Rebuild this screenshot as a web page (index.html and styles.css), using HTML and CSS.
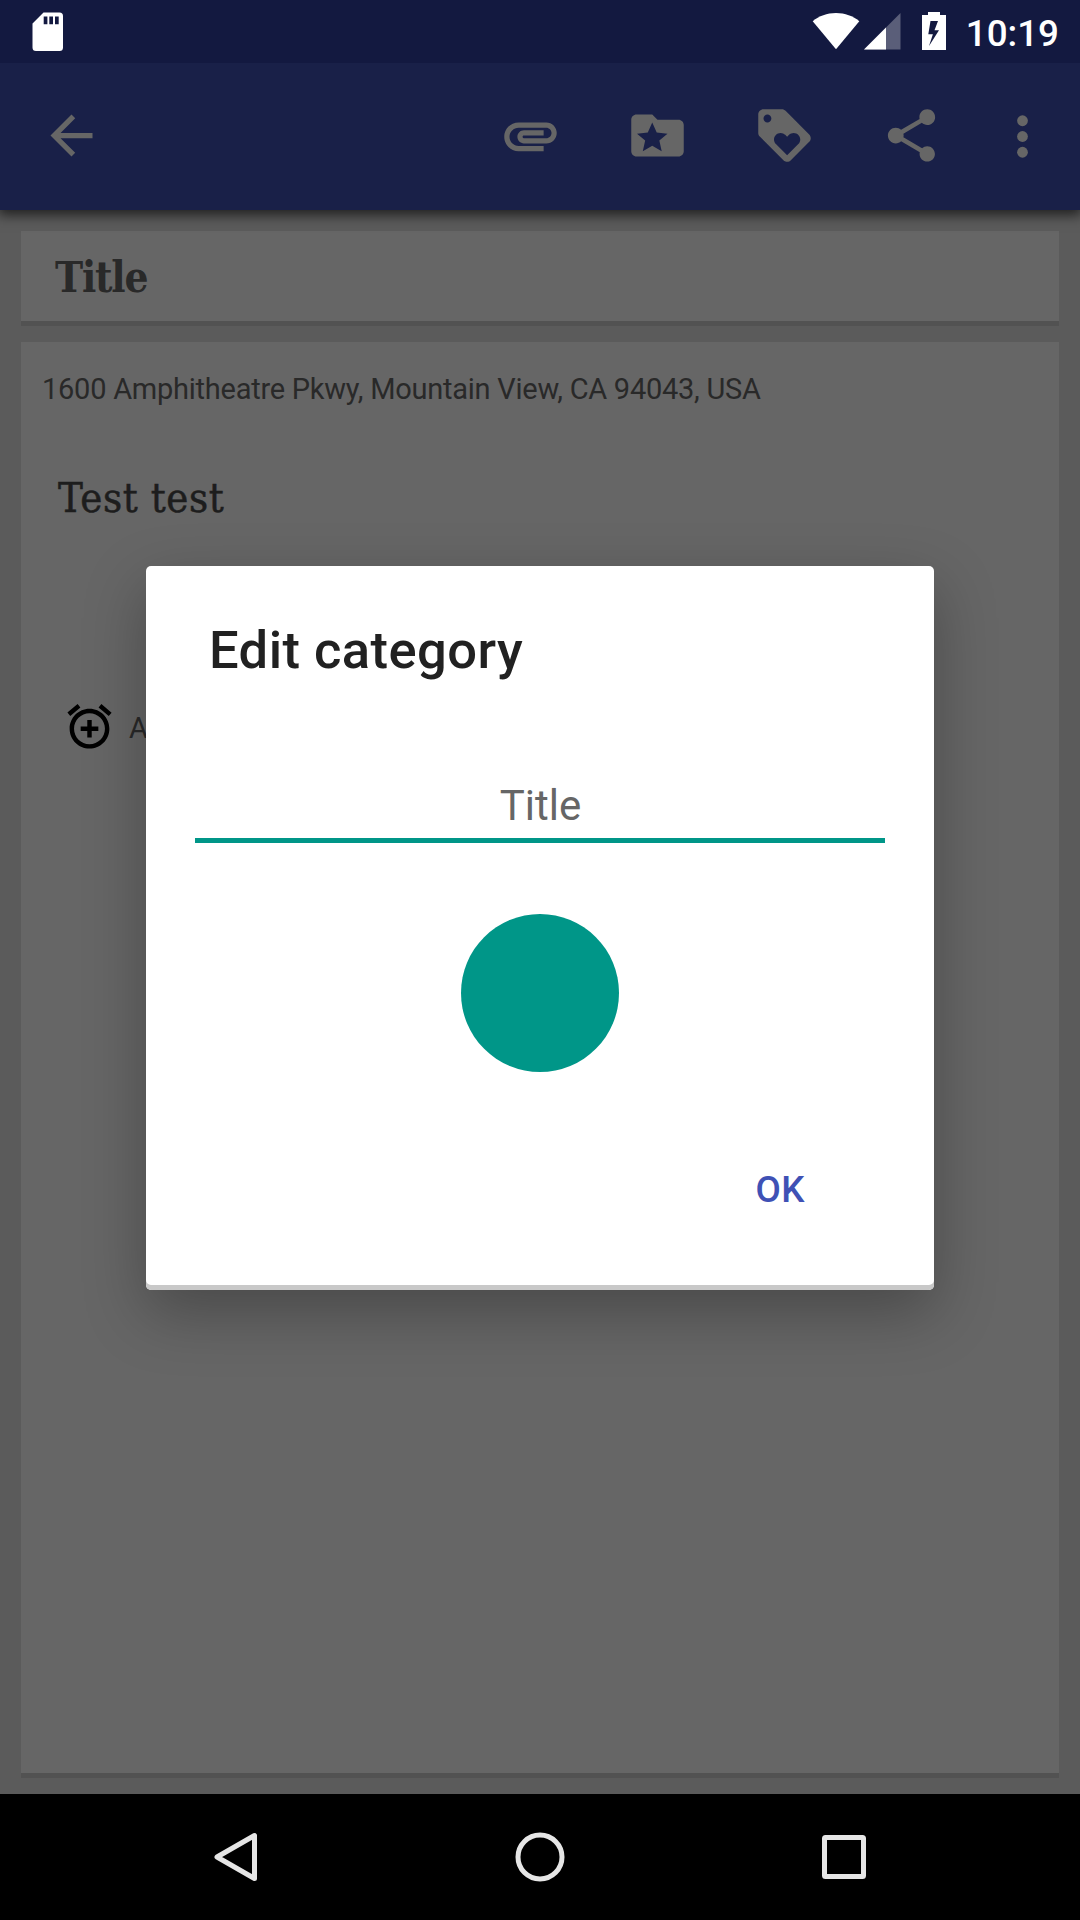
FILE: index.html
```html
<!DOCTYPE html>
<html lang="en">
<head>
<meta charset="utf-8">
<title>Edit category</title>
<link rel="stylesheet" href="styles.css">
</head>
<body>
<div class="screen">
  <header class="status">
    <svg class="sd" width="32" height="40" viewBox="0 0 32 40"><path fill="#fff" fill-rule="evenodd" d="M11.5.5H27.500a3.500 3.500 0 0 1 3.500 3.500V35.500a3.500 3.500 0 0 1-3.500 3.500H4a3.500 3.500 0 0 1-3.500-3.500V11.500ZM11.700 4.500v7.700h3.700V4.500ZM17.300 4.500v7.700h3.700V4.500ZM23 4.500v7.700h3.700V4.500Z"/></svg>
    <svg class="wifi" width="48" height="38" viewBox="0 0 48 38"><path fill="#fff" d="M24 37.200.7 9.200C7 4 15 1 24 1s17 3 23.300 8.200Z"/></svg>
    <svg class="signal" width="37" height="38" viewBox="0 0 37 38"><path fill="#fff" fill-opacity=".3" d="M36.500 1v36.500H0Z"/><path fill="#fff" d="M22 15.500v22H0Z"/></svg>
    <svg class="battery" width="24" height="38" viewBox="0 0 24 38"><path fill="#fff" fill-rule="evenodd" d="M6 0h12v3h6v35H0V3h6ZM8.500 9 6.300 22.300h4.600L7 34 17 18.300h-4.500L16 9Z"/></svg>
    <span class="clock">10:19</span>
  </header>
  <nav class="toolbar">
    <svg class="icon back" viewBox="0 0 24 24"><path d="M20 11H7.830l5.590-5.590L12 4l-8 8 8 8 1.410-1.410L7.830 13H20v-2z"/></svg>
    <div class="actions">
      <svg class="icon" viewBox="0 0 24 24"><path d="M2 12.500C2 9.460 4.460 7 7.500 7H18c2.210 0 4 1.790 4 4s-1.790 4-4 4H9.500C8.120 15 7 13.880 7 12.500S8.120 10 9.500 10H17v2H9.410c-.55 0-.55 1 0 1H18c1.100 0 2-.9 2-2s-.9-2-2-2H7.500C5.570 9 4 10.570 4 12.500S5.570 16 7.500 16H17v2H7.500C4.460 18 2 15.540 2 12.500z"/></svg>
      <svg class="icon" viewBox="0 0 24 24"><path fill-rule="evenodd" d="M10 4H4c-1.100 0-2 .9-2 2v12c0 1.100.9 2 2 2h16c1.100 0 2-.9 2-2V8c0-1.100-.9-2-2-2h-8l-2-2zM10 7l1.700 3.900 4.100.4-3.100 2.600.9 4.100-3.600-2.100L6.400 18l.9-4.100-3.100-2.600 4.100-.4Z"/></svg>
      <svg class="icon" viewBox="0 0 24 24"><path d="M21.410 11.580l-9-9C12.050 2.220 11.550 2 11 2H4c-1.100 0-2 .9-2 2v7c0 .55.22 1.050.59 1.420l9 9c.36.36.86.58 1.410.58.55 0 1.050-.22 1.410-.59l7-7c.37-.36.59-.86.59-1.410 0-.55-.23-1.060-.59-1.420zM5.500 7C4.670 7 4 6.330 4 5.500S4.670 4 5.500 4 7 4.670 7 5.500 6.330 7 5.500 7zm11.770 8.270L13 19.540l-4.270-4.270C8.280 14.810 8 14.190 8 13.500c0-1.380 1.120-2.500 2.500-2.500.69 0 1.320.28 1.770.74l.73.72.73-.73c.45-.45 1.080-.73 1.770-.73 1.380 0 2.500 1.120 2.500 2.500 0 .69-.28 1.320-.73 1.770z"/></svg>
      <svg class="icon" viewBox="0 0 24 24"><path d="M18 16.080c-.76 0-1.440.3-1.960.77L8.910 12.700c.05-.23.09-.46.09-.7s-.04-.47-.09-.7l7.050-4.110c.54.5 1.250.81 2.040.81 1.660 0 3-1.340 3-3s-1.340-3-3-3-3 1.340-3 3c0 .24.04.47.09.7L8.040 9.810C7.500 9.310 6.790 9 6 9c-1.660 0-3 1.340-3 3s1.340 3 3 3c.79 0 1.500-.31 2.040-.81l7.120 4.160c-.05.21-.08.43-.08.65 0 1.610 1.310 2.920 2.920 2.920s2.920-1.310 2.920-2.920-1.310-2.920-2.920-2.920z"/></svg>
    </div>
    <svg class="icon more" viewBox="0 0 24 24"><circle cx="12" cy="6" r="2.050"/><circle cx="12" cy="12" r="2.050"/><circle cx="12" cy="18" r="2.050"/></svg>
  </nav>
  <main class="content">
    <section class="card heading"><span class="note-title">Title</span></section>
    <section class="card body">
      <p class="address">1600 Amphitheatre Pkwy, Mountain View, CA 94043, USA</p>
      <p class="note-text">Test test</p>
      <div class="reminder">
        <svg width="53" height="53" viewBox="0 0 24 24"><path d="M7.880 3.390L6.600 1.860 2 5.710l1.290 1.530 4.590-3.850zM22 5.720l-4.600-3.860-1.290 1.530 4.600 3.860L22 5.720zM12 4c-4.970 0-9 4.030-9 9s4.020 9 9 9c4.970 0 9-4.030 9-9s-4.030-9-9-9zm0 16c-3.870 0-7-3.130-7-7s3.130-7 7-7 7 3.130 7 7-3.130 7-7 7zm1-11h-2v3H8v2h3v3h2v-3h3v-2h-3V9z"/></svg>
        <span>A</span>
      </div>
    </section>
  </main>
  <footer class="navbar">
    <svg width="50" height="50" viewBox="0 0 50 50"><path d="M43.500 3.500v43L6 25Z"/></svg>
    <svg width="50" height="50" viewBox="0 0 50 50"><circle cx="25" cy="25" r="22"/></svg>
    <svg width="50" height="50" viewBox="0 0 50 50"><rect x="5.500" y="5.500" width="39" height="39" rx="1"/></svg>
  </footer>
  <div class="dialog">
    <h1 class="dialog-title">Edit category</h1>
    <div class="field">Title</div>
    <div class="swatch"></div>
    <div class="ok">OK</div>
  </div>
</div>
</body>
</html>
```
FILE: styles.css
```css
* { box-sizing: border-box; margin: 0; padding: 0; }
body { width: 1080px; height: 1920px; overflow: hidden; background: #000; font-family: Roboto, sans-serif; }
svg { display: block; flex: none; }
.screen { position: relative; width: 1080px; height: 1920px; display: flex; flex-direction: column; }

.status { height: 63px; flex: none; position: relative; z-index: 2; background: #131940; display: flex; align-items: flex-start; padding: 12px 21px 0 32px; }
.wifi { margin-left: 748px; }
.signal { margin-left: 4px; }
.battery { margin-left: 21px; }
.clock { margin-left: auto; font-size: 36.75px; line-height: 43px; font-weight: 500; color: #fff; }

.toolbar { height: 147px; flex: none; background: #192048; display: flex; align-items: center; padding: 0 26px 1px 40px; position: relative; box-shadow: 0 3px 12px 2px rgba(0,0,0,.65); z-index: 1; }
.icon { width: 63px; height: 63px; fill: #666; }
.back { margin-bottom: 2px; }
.actions { display: flex; gap: 64px; margin: 0 0 2px auto; }
.more { margin-left: 48px; }

.content { flex: 1; background: #5b5b5b; padding: 21px 21px 16px; display: flex; flex-direction: column; gap: 16px; }
.card { background: #666; border-bottom: 5px solid #525252; }
.heading { height: 95px; padding: 22px 34px 0; }
.note-title { display: block; font: bold 42px/50px "Roboto Slab", "DejaVu Serif Condensed", "DejaVu Serif", serif; letter-spacing: -1.2px; color: #292929; }
.body { flex: 1; }
.address { margin: 30px 0 0 21px; font-size: 29px; line-height: 34px; letter-spacing: -.25px; color: #292929; white-space: nowrap; }
.note-text { margin: 67px 0 0 37px; font: 41.5px/50px "Roboto Slab", "DejaVu Serif Condensed", "DejaVu Serif", serif; letter-spacing: .6px; -webkit-text-stroke: .5px #1d1d1d; color: #1d1d1d; }
.reminder { margin: 177px 0 0 42px; display: flex; align-items: center; gap: 13px; font-size: 29px; line-height: 34px; color: #292929; }
.reminder span { padding-top: 2px; }

.navbar { height: 126px; flex: none; background: #000; display: flex; align-items: center; justify-content: center; gap: 254px; }
.navbar svg { fill: none; stroke: #e6e6e6; stroke-width: 5; stroke-linejoin: round; }

.dialog { position: absolute; z-index: 3; left: 146px; top: 566px; width: 788px; height: 724px; background: #fff; border-radius: 5px; box-shadow: inset 0 -5px #c8c8c8, 0 22px 62px rgba(0,0,0,.29); display: flex; flex-direction: column; align-items: center; }
.dialog-title { align-self: flex-start; margin: 53px 0 0 63px; font-size: 52.5px; line-height: 62px; font-weight: 500; letter-spacing: .45px; color: #212121; white-space: nowrap; }
.field { width: 690px; margin-top: 99px; height: 63px; padding: 1px 0 0 1px; border-bottom: 5px solid #009688; font-size: 42px; line-height: 50px; text-align: center; color: #666; }
.swatch { width: 158px; height: 158px; margin-top: 71px; border-radius: 50%; background: #009688; }
.ok { align-self: flex-end; margin: 96px 129px 0 0; font-size: 36.75px; line-height: 44px; font-weight: 500; letter-spacing: .5px; color: #3f51b5; }
```
